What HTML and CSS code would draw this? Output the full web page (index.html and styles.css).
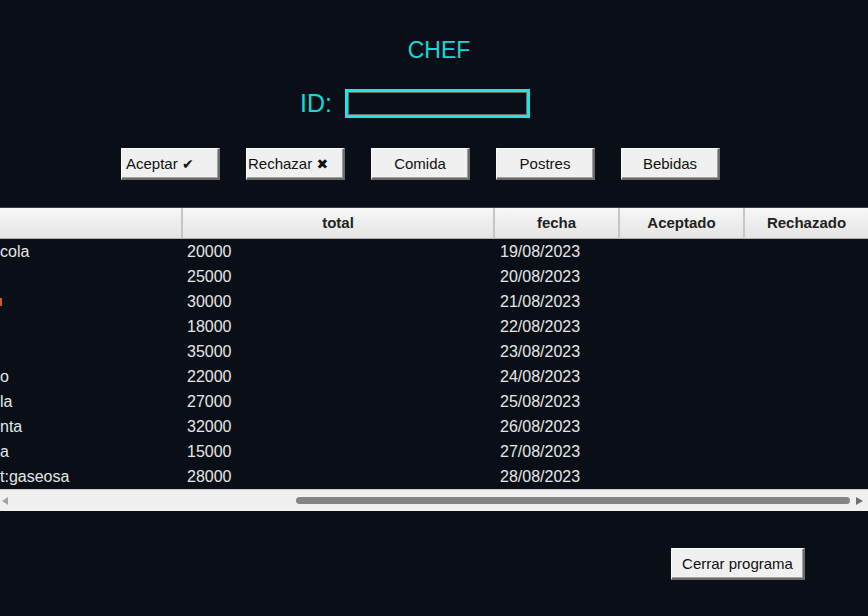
FILE: index.html
```html
<!DOCTYPE html>
<html lang="es">
<head>
<meta charset="utf-8">
<title>CHEF</title>
<link rel="stylesheet" href="styles.css">
</head>
<body>
<div class="app">
  <h1 class="title">CHEF</h1>
  <div class="id-row">
    <label class="id-label" for="id">ID:</label>
    <input class="id-input" id="id" type="text">
  </div>
  <div class="actions">
    <button class="btn btn-left">Aceptar <span class="sym">✔</span></button>
    <button class="btn btn-left btn-tight">Rechazar <span class="sym">✖</span></button>
    <button class="btn">Comida</button>
    <button class="btn">Postres</button>
    <button class="btn">Bebidas</button>
  </div>
  <div class="table">
    <div class="row head">
      <div class="hc"></div>
      <div class="hc">total</div>
      <div class="hc">fecha</div>
      <div class="hc">Aceptado</div>
      <div class="hc">Rechazado</div>
    </div>
    <div class="row"><div class="c c1">cola</div><div class="c">20000</div><div class="c cd">19/08/2023</div><div class="c"></div><div class="c"></div></div>
    <div class="row"><div class="c c1"></div><div class="c">25000</div><div class="c cd">20/08/2023</div><div class="c"></div><div class="c"></div></div>
    <div class="row"><div class="c c1"><span class="cut"></span></div><div class="c">30000</div><div class="c cd">21/08/2023</div><div class="c"></div><div class="c"></div></div>
    <div class="row"><div class="c c1"></div><div class="c">18000</div><div class="c cd">22/08/2023</div><div class="c"></div><div class="c"></div></div>
    <div class="row"><div class="c c1"></div><div class="c">35000</div><div class="c cd">23/08/2023</div><div class="c"></div><div class="c"></div></div>
    <div class="row"><div class="c c1">o</div><div class="c">22000</div><div class="c cd">24/08/2023</div><div class="c"></div><div class="c"></div></div>
    <div class="row"><div class="c c1">la</div><div class="c">27000</div><div class="c cd">25/08/2023</div><div class="c"></div><div class="c"></div></div>
    <div class="row"><div class="c c1">nta</div><div class="c">32000</div><div class="c cd">26/08/2023</div><div class="c"></div><div class="c"></div></div>
    <div class="row"><div class="c c1">a</div><div class="c">15000</div><div class="c cd">27/08/2023</div><div class="c"></div><div class="c"></div></div>
    <div class="row"><div class="c c1">t:gaseosa</div><div class="c">28000</div><div class="c cd">28/08/2023</div><div class="c"></div><div class="c"></div></div>
    <div class="hscroll">
      <span class="arrow arrow-left"></span>
      <span class="thumb"></span>
      <span class="arrow arrow-right"></span>
    </div>
  </div>
  <div class="footer">
    <button class="btn btn-close">Cerrar programa</button>
  </div>
</div>
</body>
</html>
```
FILE: styles.css
```css
html, body {
  margin: 0;
  padding: 0;
  background: #0a0f17;
  width: 868px;
  height: 616px;
  overflow: hidden;
}
body {
  font-family: "Liberation Sans", Arial, sans-serif;
}
.app {
  display: flex;
  flex-direction: column;
}
.title {
  margin: 0;
  padding-top: 36px;
  height: 28px;
  line-height: 28px;
  font-size: 23px;
  font-weight: normal;
  color: #19d6d8;
  text-align: center;
  padding-left: 10px;
}
.id-row {
  display: flex;
  align-items: center;
  margin-top: 25px;
  padding-left: 300px;
  gap: 13px;
}
.id-label {
  font-size: 25px;
  color: #19d6d8;
  line-height: 29px;
}
.id-input {
  box-sizing: border-box;
  width: 185px;
  height: 29px;
  margin: 0;
  padding: 0;
  background: #0a0f17;
  border: 3px solid #19e6e6;
  box-shadow: inset 0 0 0 1px #6c6c6c;
  outline: none;
}
.actions {
  display: flex;
  margin-top: 30px;
  padding-left: 121px;
  gap: 26px;
}
.btn {
  box-sizing: border-box;
  width: 99px;
  height: 32px;
  margin: 0;
  padding: 0 0 1px;
  font-family: "Liberation Sans", Arial, sans-serif;
  font-size: 15px;
  color: #111;
  background: #f0f0f0;
  border: 1px solid #fbfbfb;
  border-right: 2px solid #6a6a6a;
  border-bottom: 2px solid #6a6a6a;
  box-shadow: inset -1px -1px 0 #a0a0a0;
  text-align: center;
}
.btn-left {
  text-align: left;
  padding-left: 4px;
}
.btn-tight {
  padding-left: 1px;
}
.sym {
  font-family: "DejaVu Sans", sans-serif;
  font-size: 14px;
}
.table {
  margin-top: 27px;
  border-top: 1px solid #3a3f45;
  display: flex;
  flex-direction: column;
}
.row {
  display: grid;
  grid-template-columns: 183px 312px 125px 125px 123px;
  height: 25px;
}
.row.head {
  height: 31px;
}
.hc {
  box-sizing: border-box;
  background: linear-gradient(#f7f7f7, #e4e4e4);
  border-right: 2px solid #c6c6c6;
  border-bottom: 1px solid #b0b0b0;
  text-align: center;
  font-weight: bold;
  font-size: 15px;
  line-height: 29px;
  color: #222;
}
.hc:last-child {
  border-right: 0;
}
.c {
  color: #e6e6e6;
  font-size: 16px;
  line-height: 25px;
  padding-left: 4px;
  white-space: nowrap;
  overflow: hidden;
}
.c1 {
  padding-left: 0;
}
.cd {
  padding-left: 5px;
}
.cut {
  display: inline-block;
  width: 2px;
  height: 8px;
  margin-top: 9px;
  background: #c9601f;
  vertical-align: top;
}
.hscroll {
  box-sizing: border-box;
  height: 22px;
  background: #f0f0f0;
  border-top: 1px solid #c8c8c8;
  display: flex;
  align-items: center;
}
.arrow {
  width: 0;
  height: 0;
  border-top: 4px solid transparent;
  border-bottom: 4px solid transparent;
}
.arrow-left {
  margin-left: 2px;
  border-right: 6px solid #a3a3a3;
}
.thumb {
  margin-left: 288px;
  width: 554px;
  height: 7px;
  border-radius: 4px;
  background: #858585;
}
.arrow-right {
  margin-left: 6px;
  border-left: 7px solid #6f6f6f;
}
.footer {
  margin-top: 37px;
  padding-left: 671px;
  display: flex;
}
.btn-close {
  width: 134px;
}
```
